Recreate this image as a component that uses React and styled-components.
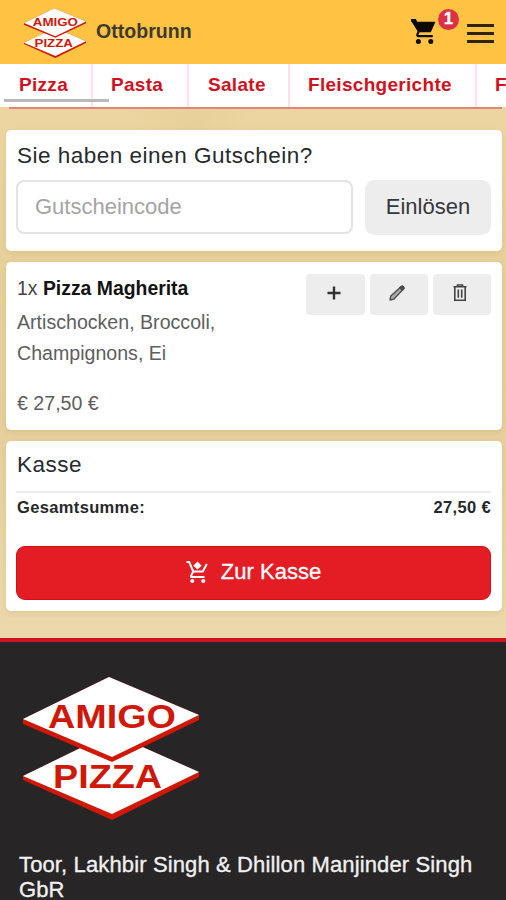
import React from "react";
import styled, { createGlobalStyle } from "styled-components";

const GlobalStyle = createGlobalStyle`
  * { box-sizing: border-box; }
  body {
    margin: 0;
    overflow: hidden;
    font-family: "Liberation Sans", Arial, sans-serif;
    background: #272526;
  }
`;

const Page = styled.div`
  width: 506px;
  height: 900px;
  overflow: hidden;
  display: flex;
  flex-direction: column;
`;

const Header = styled.header`
  height: 64px;
  flex: none;
  display: flex;
  align-items: flex-start;
  background: #ffc344;
  padding: 8px 12px 0 24px;
`;

const Branch = styled.div`
  flex: 1;
  margin: 11px 0 0 10px;
  font-size: 19.5px;
  line-height: 25px;
  font-weight: 700;
  letter-spacing: 0.05px;
  color: #3e3a2b;
`;

const CartLink = styled.div`
  position: relative;
  width: 28px;
  height: 28px;
  margin: 11px 28px 0 0;
  svg { display: block; }
`;

const Badge = styled.span`
  position: absolute;
  left: 27px;
  top: -10px;
  width: 21px;
  height: 21px;
  border-radius: 50%;
  background: #dc3045;
  color: #fff;
  font-size: 16px;
  line-height: 20px;
  font-weight: 700;
  text-align: center;
  -webkit-text-stroke: 0.5px #fff;
`;

const Burger = styled.div`
  width: 27px;
  margin-top: 16px;
  display: grid;
  gap: 5px;
`;

const BurgerLine = styled.span`
  height: 3px;
  background: #2e2410;
`;

const Tabs = styled.nav`
  height: 43px;
  flex: none;
  display: flex;
  overflow: hidden;
  background: #fff;
`;

const Tab = styled.div`
  position: relative;
  flex: none;
  width: ${(p) => p.$width}px;
  padding-left: ${(p) => p.$inset}px;
  border-right: 2px solid #fde0e5;
  color: #d0121f;
  font-size: 19px;
  line-height: 42px;
  font-weight: 700;
  letter-spacing: 0.3px;
`;

const ScrollThumb = styled.span`
  position: absolute;
  left: 4px;
  top: 35px;
  width: 105px;
  height: 3px;
  z-index: 1;
  background: #b9b9b9;
`;

const Main = styled.main`
  height: 531px;
  flex: none;
  display: flex;
  flex-direction: column;
  gap: 11px;
  padding: 0 4px 0 6px;
  background:
    radial-gradient(ellipse at 38% 2%, rgba(190, 150, 90, 0.07), transparent 14%),
    linear-gradient(#ecd5a0, #e8d09a 28%, #e6cf9c 60%, #ecd8ab);
`;

const RedRule = styled.div`
  height: 2px;
  flex: none;
  margin: 0 0 10px 3px;
  background: #e08577;
`;

const Card = styled.section`
  height: ${(p) => p.$height}px;
  flex: none;
  padding: ${(p) => p.$top}px 11px 0;
  border-radius: 5px;
  background: #fff;
  box-shadow: 0 2px 5px rgba(130, 100, 40, 0.12);
`;

const Title = styled.h2`
  margin: 0;
  font-size: 22.5px;
  line-height: 28px;
  font-weight: 400;
  letter-spacing: 0.5px;
  color: #272a2e;
`;

const VoucherRow = styled.div`
  display: flex;
  gap: 12px;
  margin: 10px 0 0 -1px;
`;

const VoucherInput = styled.input`
  flex: 1;
  min-width: 0;
  height: 54px;
  padding: 0 0 0 17px;
  border: 2px solid #e3e3e3;
  border-radius: 8px;
  outline: none;
  background: #fff;
  font: 22px "Liberation Sans", Arial, sans-serif;
  &::placeholder { color: #a4a4a4; opacity: 1; }
`;

const RedeemButton = styled.button`
  width: 126px;
  height: 55px;
  padding: 0 0 1px;
  border: 0;
  border-radius: 9px;
  background: #ededed;
  color: #36383b;
  font: 22px "Liberation Sans", Arial, sans-serif;
`;

const ItemRow = styled.div`
  display: flex;
  justify-content: space-between;
  height: 40px;
`;

const ItemName = styled.div`
  font-size: 19.4px;
  line-height: 28px;
  color: #444;
  b { color: #131313; }
`;

const ItemActions = styled.div`
  display: flex;
  gap: 5px;
`;

const IconButton = styled.button`
  width: ${(p) => p.$width || 58}px;
  height: 41px;
  padding: 0 4px 3px 0;
  border: 0;
  border-radius: 4px;
  background: #ededed;
  display: flex;
  align-items: center;
  justify-content: center;
`;

const Extras = styled.div`
  width: 230px;
  margin-top: -7px;
  font-size: 19.6px;
  line-height: 31px;
  color: #5e5e5e;
`;

const Price = styled.div`
  margin-top: 19px;
  font-size: 19.6px;
  line-height: 31px;
  color: #5e5e5e;
`;

const TotalRow = styled.div`
  display: flex;
  justify-content: space-between;
  margin: 12px 0 0 -1px;
  padding: 2px 0 0 1px;
  border-top: 2px solid #ededed;
  font-size: 16.5px;
  line-height: 24px;
  font-weight: 700;
  letter-spacing: 0.35px;
  color: #26282a;
`;

const CheckoutButton = styled.button`
  width: 475px;
  height: 54px;
  margin: 27px 0 0 -1px;
  padding: 0 0 2px;
  border: 1px solid #d3101a;
  border-radius: 9px;
  background: #e41c23;
  color: #fff;
  display: flex;
  align-items: center;
  justify-content: center;
  gap: 13px;
  font: 22px "Liberation Sans", Arial, sans-serif;
  -webkit-text-stroke: 0.3px #fff;
`;

const Footer = styled.footer`
  flex: 1;
  padding: 34px 19px 0;
  border-top: 4px solid #cf1422;
  background: #272526;
`;

const FooterLogo = styled.div`
  margin-left: 4px;
  height: 144px;
`;

const Company = styled.p`
  margin: 32px -5px 0 0;
  font-size: 22px;
  line-height: 25px;
  letter-spacing: 0.13px;
  color: #f0f0f0;
  -webkit-text-stroke: 0.35px #f0f0f0;
`;

function Logo({ width, height }) {
  return (
    <svg width={width} height={height} viewBox="0 0 176 144" preserveAspectRatio="none" display="block">
      <path d="M0 100 L88 57 L176 96 V101 L89 144 L0 104Z" fill="#cf1808" />
      <path d="M0 100 L88 57 L176 96 L89 138Z" fill="#fff" />
      <path d="M0 43 L86 1 L176 39 V44 L89 86 L0 48Z" fill="#cf1808" />
      <path d="M0 43 L86 1 L176 39 L89 81Z" fill="#fff" />
      <g fill="#cf1808" fontFamily="Liberation Sans, Arial, sans-serif" fontWeight="700" fontSize="33">
        <text x="25" y="52" textLength="128" lengthAdjust="spacingAndGlyphs">AMIGO</text>
        <text x="30" y="112" textLength="109" lengthAdjust="spacingAndGlyphs">PIZZA</text>
      </g>
    </svg>
  );
}

function CartIcon() {
  return (
    <svg width="25" height="26" viewBox="0 0 25 26" fill="#0d0a04">
      <path d="M0 0H4.8L6.3 2.8H24.5L19.8 13.2H7.2L0 1.8Z" />
      <path d="M0 1.3H3.8L8.2 11.5L6.4 15.4Q6 17.1 7.4 17.1H21.8" fill="none" stroke="#0d0a04" strokeWidth="2.2" />
      <circle cx="7.4" cy="22.6" r="2.5" />
      <circle cx="19.8" cy="22.6" r="2.5" />
    </svg>
  );
}

function CheckoutCartIcon() {
  return (
    <svg width="22" height="24" viewBox="0 0 22 24" fill="none" stroke="#fff" strokeWidth="2">
      <path d="M0.5 2H3.2L7.2 11.5H16.8L20.8 4" />
      <path d="M7.2 11.5L5.2 15.5V17H18.5" />
      <path d="M11.5 1.5L15.7 5.7L11.5 9.5L7.3 5.7Z" fill="#fff" stroke="none" />
      <circle cx="6.3" cy="21" r="2.1" fill="#fff" stroke="none" />
      <circle cx="17.3" cy="21" r="2.1" fill="#fff" stroke="none" />
    </svg>
  );
}

const tabs = [
  { label: "Pizza", width: 93, inset: 19 },
  { label: "Pasta", width: 96, inset: 18 },
  { label: "Salate", width: 101, inset: 19 },
  { label: "Fleischgerichte", width: 187, inset: 18 },
  { label: "F", width: 100, inset: 18 },
];

export default function App() {
  return (
    <>
      <GlobalStyle />
      <Page>
        <Header>
          <Logo width={62} height={50} />
          <Branch>Ottobrunn</Branch>
          <CartLink>
            <CartIcon />
            <Badge>1</Badge>
          </CartLink>
          <Burger>
            <BurgerLine />
            <BurgerLine />
            <BurgerLine />
          </Burger>
        </Header>
        <Tabs>
          {tabs.map((t, i) => (
            <Tab key={t.label} $width={t.width} $inset={t.inset}>
              {t.label}
              {i === 0 && <ScrollThumb />}
            </Tab>
          ))}
        </Tabs>
        <Main>
          <RedRule />
          <Card $height={121} $top={12}>
            <Title>Sie haben einen Gutschein?</Title>
            <VoucherRow>
              <VoucherInput placeholder="Gutscheincode" />
              <RedeemButton>Einlösen</RedeemButton>
            </VoucherRow>
          </Card>
          <Card $height={168} $top={12}>
            <ItemRow>
              <ItemName>1x <b>Pizza Magherita</b></ItemName>
              <ItemActions>
                <IconButton $width={59}>
                  <svg width="14" height="14" viewBox="0 0 14 14" stroke="#333" strokeWidth="2.4">
                    <path d="M7 0.5V13.5M0.5 7H13.5" />
                  </svg>
                </IconButton>
                <IconButton>
                  <svg width="16" height="16" viewBox="0 0 16 16" fill="#a8a8a8" stroke="#4c4c4c" strokeWidth="1.3" strokeLinejoin="round">
                    <path d="M1 15L1.8 11L12.2 1.5Q13.2 0.7 14.2 1.7Q15.5 2.8 14.6 3.9L4.8 14.2Z" />
                    <path d="M10.8 2.8L13.4 5.2L14.6 3.9Q15.5 2.8 14.2 1.7Q13.2 0.7 12.2 1.5Z" fill="#4c4c4c" />
                  </svg>
                </IconButton>
                <IconButton>
                  <svg width="14" height="18" viewBox="0 0 14 18" fill="none" stroke="#444" strokeWidth="1.6">
                    <path d="M0.5 2.8H13.5M4.5 2V1H9.5V2M1.8 3V16.2H12.2V3M5.3 5.5V13.8M8.7 5.5V13.8" />
                  </svg>
                </IconButton>
              </ItemActions>
            </ItemRow>
            <Extras>Artischocken, Broccoli, Champignons, Ei</Extras>
            <Price>€ 27,50 €</Price>
          </Card>
          <Card $height={170} $top={10}>
            <Title>Kasse</Title>
            <TotalRow>
              <span>Gesamtsumme:</span>
              <span>27,50 €</span>
            </TotalRow>
            <CheckoutButton>
              <CheckoutCartIcon />
              Zur Kasse
            </CheckoutButton>
          </Card>
        </Main>
        <Footer>
          <FooterLogo>
            <Logo width={176} height={144} />
          </FooterLogo>
          <Company>Toor, Lakhbir Singh &amp; Dhillon Manjinder Singh GbR</Company>
        </Footer>
      </Page>
    </>
  );
}
